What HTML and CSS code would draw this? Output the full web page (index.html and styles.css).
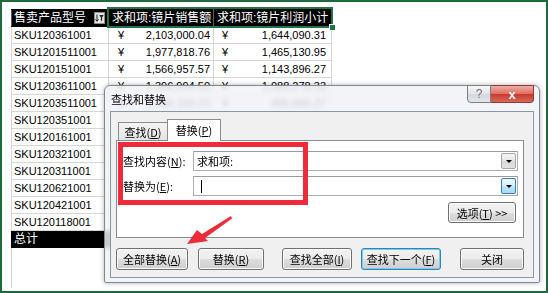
FILE: index.html
```html
<!DOCTYPE html>
<html lang="zh-CN">
<head>
  <meta charset="UTF-8" />
  <title>查找和替换</title>
  <link rel="stylesheet" href="styles.css">
</head>
<body>
  <div class="screen">
    <div class="sheet">
      <table class="pivot">
        <colgroup><col class="w1"><col class="w2"><col class="w3"></colgroup>
        <tr class="head">
          <th><svg class="filter" width="11" height="12" viewBox="0 0 11 12"><rect x=".5" y=".5" width="10" height="11" fill="#e4e4e4" stroke="#8c8c8c"/><path d="M3 2.5v6.5M1.5 7.3 3 9.3 4.5 7.3" stroke="#222" fill="none"/><path d="M5.3 3h4.4L8.1 5.4V9.2L6.9 8.6V5.4z" fill="#222"/></svg>售卖产品型号</th>
          <th>求和项:镜片销售额</th>
          <th>求和项:镜片利润小计</th>
        </tr>
        <tr><td>SKU120361001</td><td class="num n2"><i>¥</i>2,103,000.04</td><td class="num n3"><i>¥</i>1,644,090.31</td></tr>
        <tr><td>SKU1201511001</td><td class="num n2"><i>¥</i>1,977,818.76</td><td class="num n3"><i>¥</i>1,465,130.95</td></tr>
        <tr><td>SKU120151001</td><td class="num n2"><i>¥</i>1,566,957.57</td><td class="num n3"><i>¥</i>1,143,896.27</td></tr>
        <tr><td>SKU1203611001</td><td class="num n2"><i>¥</i>1,396,994.50</td><td class="num n3"><i>¥</i>1,088,278.33</td></tr>
        <tr><td>SKU1203511001</td><td class="num n2"><i>¥</i>1,266,150.22</td><td class="num n3"><i>¥</i>995,866.27</td></tr>
        <tr><td>SKU120351001</td><td class="num n2"><i>¥</i>1,104,372.80</td><td class="num n3"><i>¥</i>861,410.18</td></tr>
        <tr><td>SKU120161001</td><td class="num n2"><i>¥</i>987,625.40</td><td class="num n3"><i>¥</i>770,347.81</td></tr>
        <tr><td>SKU120321001</td><td class="num n2"><i>¥</i>856,210.63</td><td class="num n3"><i>¥</i>667,844.29</td></tr>
        <tr><td>SKU120311001</td><td class="num n2"><i>¥</i>745,980.15</td><td class="num n3"><i>¥</i>581,864.52</td></tr>
        <tr><td>SKU120621001</td><td class="num n2"><i>¥</i>632,418.90</td><td class="num n3"><i>¥</i>493,286.74</td></tr>
        <tr><td>SKU120421001</td><td class="num n2"><i>¥</i>520,733.36</td><td class="num n3"><i>¥</i>406,172.02</td></tr>
        <tr><td>SKU120118001</td><td class="num n2"><i>¥</i>418,095.12</td><td class="num n3"><i>¥</i>326,114.19</td></tr>
        <tr class="total"><td>总计</td><td class="num n2"><i>¥</i>13,576,357.45</td><td class="num n3"><i>¥</i>10,444,501.88</td></tr>
      </table>
      <div class="tail"></div>
    </div>

    <div class="selection"><span class="handle"></span></div>

    <div class="dialog">
      <div class="titlebar">
        <span class="title">查找和替换</span>
        <div class="caps">
          <span class="cap help">?</span>
          <span class="cap close">x</span>
        </div>
      </div>
      <div class="body">
        <div class="tabs">
          <span class="tab">查找(<u>D</u>)</span>
          <span class="tab active">替换(<u>P</u>)</span>
        </div>
        <div class="panel">
          <div class="field">
            <label>查找内容(<u>N</u>):</label>
            <div class="combo"><span class="value">求和项:</span><span class="drop"></span></div>
          </div>
          <div class="field">
            <label>替换为(<u>E</u>):</label>
            <div class="combo focus"><span class="caret"></span><span class="drop"></span></div>
          </div>
          <div class="options">
            <span class="btn opt">选项(<u>T</u>) &gt;&gt;</span>
          </div>
        </div>
        <div class="actions">
          <span class="btn b1">全部替换(<u>A</u>)</span>
          <span class="btn b2">替换(<u>R</u>)</span>
          <span class="btn b3">查找全部(<u>I</u>)</span>
          <span class="btn b4 default">查找下一个(<u>F</u>)</span>
          <span class="btn b5">关闭</span>
        </div>
      </div>
    </div>

    <div class="redbox"></div>
    <svg class="arrow" width="548" height="293" viewBox="0 0 548 293">
      <polygon points="187,244 197,230 202,234 231,216 232,218.5 205,238 208,241" fill="#ee2b38"/>
    </svg>
  </div>
</body>
</html>
```

FILE: styles.css
```css
body {
  margin: 0;
  background: #fff;
}
.screen {
  position: relative;
  width: 548px;
  height: 293px;
  box-sizing: border-box;
  border: 2px solid #1f6a3d;
  overflow: hidden;
  font-family: "Liberation Sans", "Noto Sans CJK SC", sans-serif;
}

/* spreadsheet */
.sheet {
  padding: 7px 0 0 9px;
}
.pivot {
  border-collapse: collapse;
  table-layout: fixed;
  width: 320px;
  font-size: 11px;
  color: #000;
}
.w1 { width: 97px; }
.w2 { width: 105px; }
.w3 { width: 118px; }
.pivot td, .pivot th {
  height: 16px;
  line-height: 16px;
  padding: 0 2px;
  border: 1px solid #d6d6d6;
  white-space: nowrap;
  overflow: hidden;
  text-align: left;
  font-weight: normal;
}
.pivot .head th {
  background: #000;
  color: #fff;
  font-size: 12px;
  border-color: #000 #5a5a5a;
}
.pivot .head th:nth-child(2) { padding-left: 3px; }
.pivot .head th:nth-child(3) { padding-left: 3px; }
.filter {
  float: right;
  margin: 2px 1px 0 0;
}
.pivot .num {
  text-align: right;
}
.pivot .num i {
  float: left;
  font-style: normal;
}
.pivot .n2 { padding: 0 3px 0 9px; }
.pivot .n3 { padding: 0 5px 0 8px; }
.pivot .total td {
  background: #000;
  color: #fff;
  font-size: 12px;
  border-color: #000;
}
.tail {
  height: 40px;
  border-left: 1px solid #d6d6d6;
}
.selection {
  position: absolute;
  left: 105px;
  top: 5px;
  width: 226px;
  height: 21px;
  box-sizing: border-box;
  border: 2px solid #217346;
}
.handle {
  position: absolute;
  right: -5px;
  bottom: -5px;
  width: 5px;
  height: 5px;
  background: #217346;
  border: 1px solid #fff;
}

/* dialog */
.dialog {
  position: absolute;
  left: 102px;
  top: 83px;
  width: 436px;
  height: 198px;
  box-sizing: border-box;
  padding: 0 5px 4px 5px;
  display: flex;
  flex-direction: column;
  border: 1px solid #7d8894;
  border-radius: 6px 6px 2px 2px;
  background: rgba(240, 242, 245, 0.84);
  backdrop-filter: blur(2px);
  box-shadow: 0 0 5px rgba(0, 0, 0, 0.3);
  font-family: "Noto Sans CJK SC", "Liberation Sans", sans-serif;
  font-size: 11px;
  color: #000;
}
.titlebar {
  height: 25px;
  display: flex;
  align-items: center;
}
.title {
  padding-left: 1px;
}
.caps {
  margin-left: auto;
  align-self: flex-start;
  display: flex;
  margin-top: -1px;
}
.cap {
  height: 18px;
  box-sizing: border-box;
  display: flex;
  align-items: center;
  justify-content: center;
  border: 1px solid #7a7f87;
  font-family: "Liberation Sans", sans-serif;
}
.help {
  width: 24px;
  border-radius: 0 0 0 4px;
  background: linear-gradient(#f6f6f6, #e2e4e8 50%, #d4d7dc 51%, #e3e6ea);
  color: #6a6f78;
  font-size: 12px;
}
.close {
  width: 43px;
  border-left: none;
  border-color: #8d3a33;
  border-radius: 0 0 4px 0;
  background: linear-gradient(#eeaea6, #de6f63 48%, #c9392c 52%, #d8685c);
  color: #fff;
  font-weight: bold;
  font-size: 13px;
}
.body {
  flex: 1;
  background: #f0f0f0;
  border: 1px solid #8c96a2;
  padding: 7px 0 0 5px;
}
.tabs {
  display: flex;
  align-items: flex-end;
  height: 21px;
  margin-left: 2px;
}
.tab {
  width: 50px;
  height: 18px;
  box-sizing: border-box;
  display: flex;
  align-items: center;
  justify-content: center;
  border: 1px solid #898c95;
  border-bottom: none;
  background: linear-gradient(#f4f4f4, #e4e4e4);
}
.tab.active {
  position: relative;
  z-index: 1;
  width: 54px;
  height: 22px;
  margin: 0 0 -1px -1px;
  background: #fff;
  align-items: flex-start;
  padding-top: 2px;
}
.panel {
  width: 408px;
  height: 98px;
  box-sizing: border-box;
  border: 1px solid #898c95;
  background: #fff;
  padding-top: 10px;
}
.field {
  display: flex;
  align-items: center;
  height: 20px;
  margin-bottom: 5px;
}
.field label {
  width: 76px;
  padding-left: 6px;
  box-sizing: border-box;
}
.combo {
  width: 325px;
  height: 20px;
  box-sizing: border-box;
  display: flex;
  align-items: center;
  border: 1px solid #abadb3;
  border-top-color: #9a9ca3;
}
.combo .value {
  padding-left: 3px;
}
.caret {
  width: 1px;
  height: 13px;
  margin-left: 7px;
  background: #000;
}
.drop {
  margin: 0 1px 0 auto;
  width: 15px;
  height: 16px;
  box-sizing: border-box;
  border: 1px solid #a6a6a6;
  border-radius: 2px;
  background: linear-gradient(#f4f4f4, #e6e6e6 50%, #d9d9d9 51%, #e0e0e0);
  position: relative;
}
.drop::after {
  content: "";
  position: absolute;
  left: 4px;
  top: 6px;
  border: 3px solid transparent;
  border-top: 3px solid #000;
  border-bottom: none;
}
.focus .drop {
  border-color: #3c7fb1;
  background: linear-gradient(#eaf6fd, #d9f0fc 50%, #bee6fd 51%, #a7d9f5);
}
.options {
  display: flex;
  justify-content: flex-end;
  padding-right: 7px;
  margin-top: 6px;
}
.btn {
  height: 22px;
  box-sizing: border-box;
  display: flex;
  align-items: center;
  justify-content: center;
  border: 1px solid #707070;
  border-radius: 3px;
  background: linear-gradient(#f2f2f2, #ebebeb 50%, #dddddd 51%, #cfcfcf);
  box-shadow: inset 0 0 0 1px #fbfbfb;
}
.btn.opt {
  width: 68px;
  height: 21px;
}
.actions {
  display: flex;
  margin-top: 10px;
}
.b1 { width: 72px; }
.b2 { width: 66px; margin-left: 10px; }
.b3 { width: 70px; margin-left: 18px; }
.b4 { width: 80px; margin-left: 9px; }
.b5 { width: 64px; margin-left: 19px; }
.btn.default {
  border-color: #3c7fb1;
  box-shadow: inset 0 0 0 1px #6cd0f8;
}

/* annotation */
.redbox {
  position: absolute;
  left: 116px;
  top: 140px;
  width: 190px;
  height: 63px;
  box-sizing: border-box;
  border: 5px solid #ef2b3a;
}
.arrow {
  position: absolute;
  left: -2px;
  top: -2px;
}
```
